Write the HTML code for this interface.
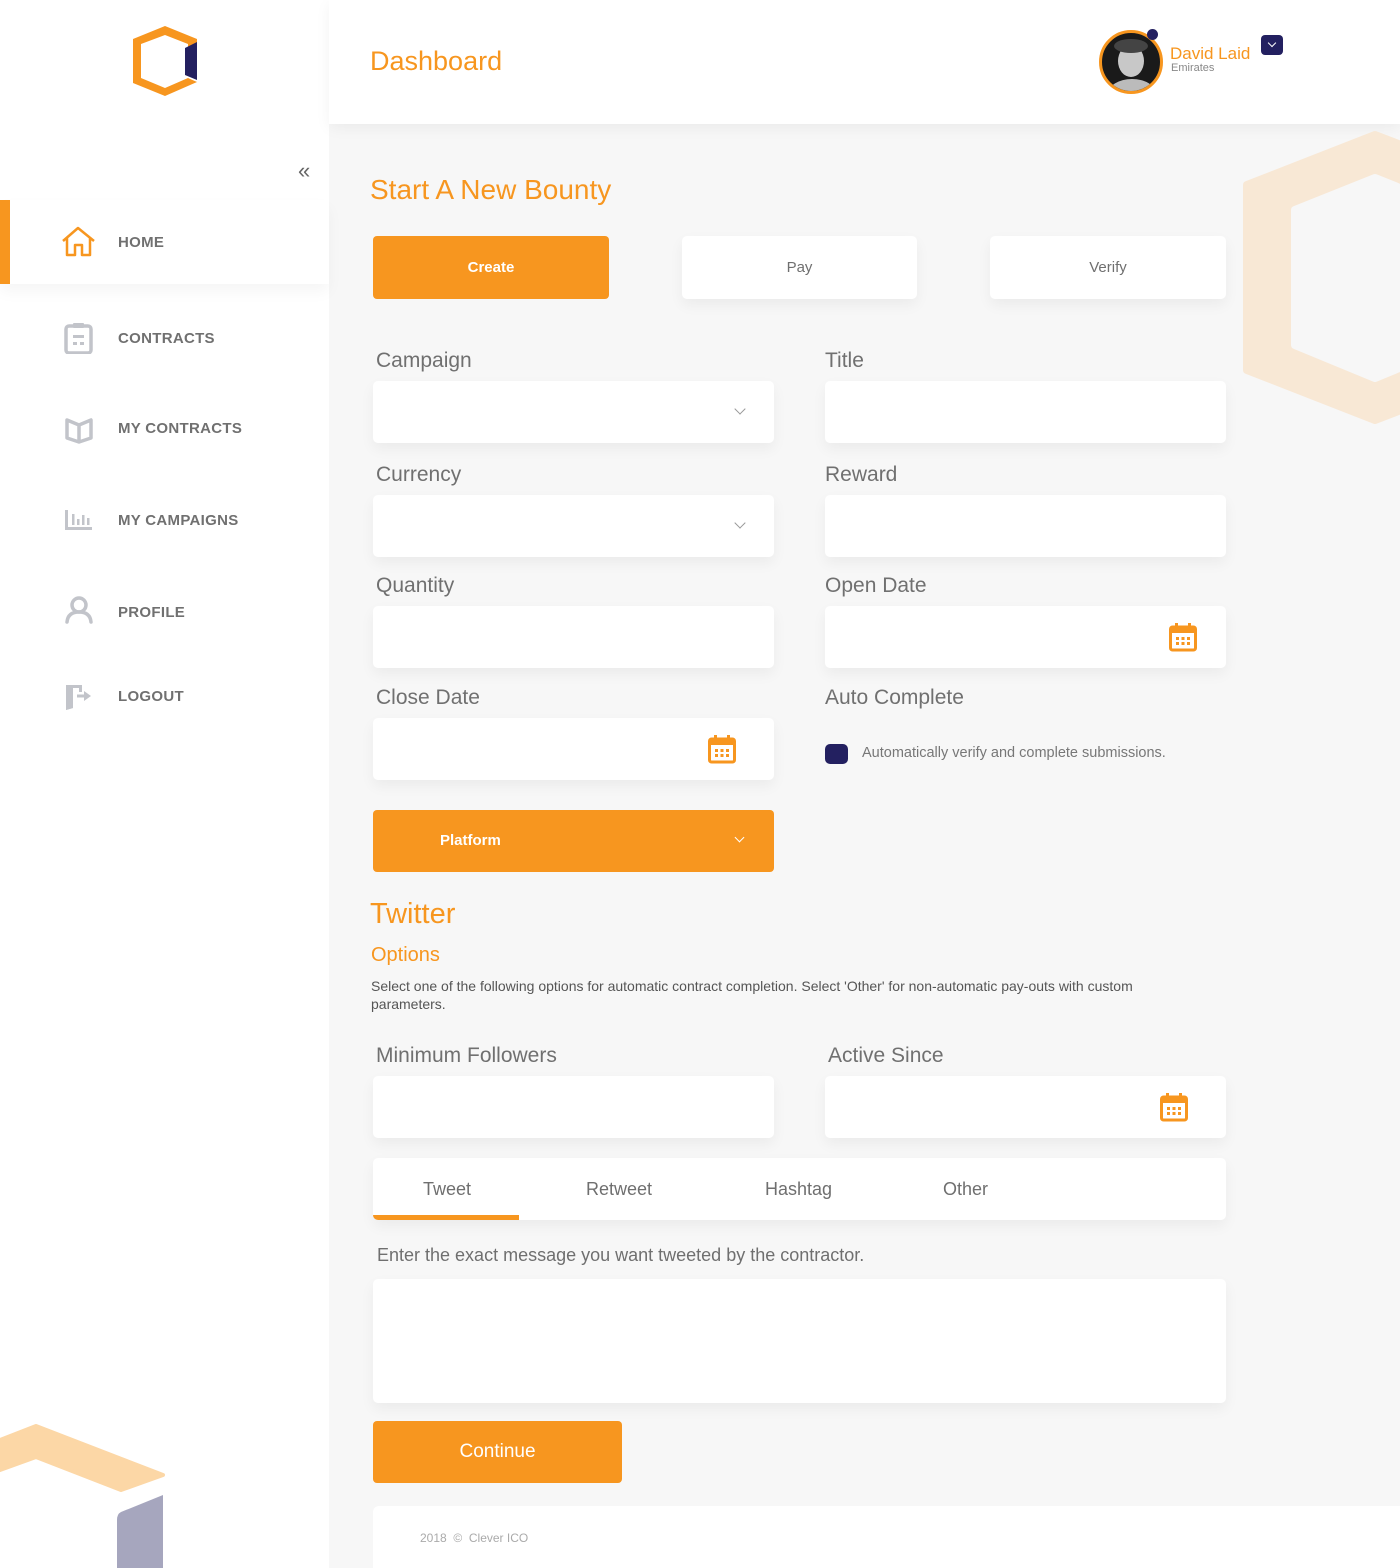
<!DOCTYPE html>
<html><head><meta charset="utf-8"><style>
*{margin:0;padding:0;box-sizing:border-box}
body{width:1400px;height:1568px;position:relative;overflow:hidden;background:#f7f7f7;font-family:"Liberation Sans",sans-serif;color:#6f6f6f}
.a{position:absolute}
.side{left:0;top:0;width:329px;height:1568px;background:#fff}
.hdr{left:329px;top:0;width:1071px;height:124px;background:#fff;box-shadow:0 4px 14px rgba(0,0,0,.05)}
.nav{left:118px;font-size:15px;font-weight:bold;color:#707070;letter-spacing:.3px}
.lbl{font-size:21px;color:#707070;margin-top:2px}
.box{background:#fff;border-radius:5px;box-shadow:0 6px 14px rgba(0,0,0,.05);height:62px}
.btn{background:#f7961f;border-radius:4px;color:#fff;font-weight:bold;text-align:center}
.chev{width:8px;height:8px;border-right:1.5px solid #999;border-bottom:1.5px solid #999;transform:rotate(45deg)}
.orange{color:#f7961f}
</style></head><body>
<div class="a side"></div>
<svg class="a" style="left:0;top:1420px" width="170" height="148"><polygon points="0,20 36,6 163,55 121,70 36,37 0,50" fill="#fcd7a6" stroke="#fcd7a6" stroke-width="4" stroke-linejoin="round"/><path d="M121,92 Q117,94 117,100 L117,148 L163,148 L163,75 Z" fill="#a6a6be"/></svg>
<div class="a hdr"></div>
<svg class="a" style="left:128px;top:22px" width="76" height="78"><polygon points="37,4 69,17 69,26 60,31 60,22 37,13 13,22 13,56 37,66 60,56 69,60 69,60 37,74 5,61 5,17" fill="#f7961f"/><polygon points="57,26 69,20 69,58 57,53" fill="#232060"/></svg>
<div class="a" style="left:298px;top:158px;font-size:22px;color:#666">«</div>
<div class="a" style="left:0;top:200px;width:329px;height:84px;background:#fff;box-shadow:0 8px 14px rgba(0,0,0,.04)"></div>
<div class="a" style="left:0;top:200px;width:10px;height:84px;background:#f7961f"></div>
<svg class="a" style="left:61px;top:226px" width="36" height="32" fill="none" stroke="#f7961f" stroke-width="2.5" stroke-linejoin="round"><path d="M2,15 L17,2 L33,15 M6,12 V29 H14 V19 H21 V29 H29 V12"/></svg>
<div class="a nav" style="top:234px">HOME</div>
<svg class="a" style="left:64px;top:322px" width="30" height="32"><rect x="2" y="4" width="25" height="27" rx="3" fill="none" stroke="#c2c4ca" stroke-width="3.5"/><rect x="9" y="1" width="11" height="5" rx="1" fill="#c2c4ca"/><rect x="9" y="13" width="11" height="3" fill="#c2c4ca"/><rect x="9" y="20" width="4" height="3" fill="#c2c4ca"/><rect x="16" y="20" width="4" height="3" fill="#c2c4ca"/></svg>
<div class="a nav" style="top:330px">CONTRACTS</div>
<svg class="a" style="left:64px;top:416px" width="30" height="28" fill="none" stroke="#c2c4ca" stroke-width="3.5" stroke-linejoin="round"><path d="M3,4 L15,9 L27,4 V22 L15,26 L3,22 Z M15,9 V26"/></svg>
<div class="a nav" style="top:420px">MY CONTRACTS</div>
<svg class="a" style="left:64px;top:508px" width="30" height="24" fill="#c2c4ca"><rect x="1" y="2" width="3" height="20"/><rect x="1" y="19" width="27" height="3"/><rect x="8" y="6" width="2.5" height="11"/><rect x="13" y="11" width="2.5" height="6"/><rect x="18" y="7" width="2.5" height="10"/><rect x="23" y="10" width="2.5" height="7"/></svg>
<div class="a nav" style="top:512px">MY CAMPAIGNS</div>
<svg class="a" style="left:64px;top:595px" width="30" height="30" fill="none" stroke="#c2c4ca" stroke-width="3.5" stroke-linecap="round"><circle cx="15" cy="10" r="7"/><path d="M3,27 Q4,17 15,17 Q26,17 27,27"/></svg>
<div class="a nav" style="top:604px">PROFILE</div>
<svg class="a" style="left:64px;top:682px" width="30" height="30" fill="#c2c4ca"><path d="M2,3 H18 V10 H15 V6 H9 V26 L2,28 Z"/><path d="M9,5 L2,3 V28 L9,26Z"/><rect x="13" y="12.5" width="9" height="3"/><path d="M20,9 L27,14 L20,19 Z"/></svg>
<div class="a nav" style="top:688px">LOGOUT</div>

<div class="a orange" style="left:370px;top:46px;font-size:27px">Dashboard</div>
<div class="a" style="left:1099px;top:30px;width:64px;height:64px;border-radius:50%;border:3px solid #f7961f;background:#1a1a1a;overflow:hidden">
<div class="a" style="left:16px;top:12px;width:26px;height:32px;border-radius:50%;background:#c8c8c8"></div>
<div class="a" style="left:12px;top:6px;width:34px;height:14px;border-radius:50%;background:#444"></div>
<div class="a" style="left:6px;top:46px;width:48px;height:30px;border-radius:50%;background:#bbb"></div>
</div>
<div class="a" style="left:1147px;top:29px;width:11px;height:11px;border-radius:50%;background:#232060"></div>
<div class="a orange" style="left:1170px;top:44px;font-size:17px">David Laid</div>
<div class="a" style="left:1171px;top:62px;font-size:11px;color:#888">Emirates</div>
<div class="a" style="left:1261px;top:35px;width:22px;height:20px;border-radius:4px;background:#232060"><div class="a" style="left:8px;top:5px;width:6px;height:6px;border-right:1.5px solid #fff;border-bottom:1.5px solid #fff;transform:rotate(45deg)"></div></div>

<svg class="a" style="left:1240px;top:130px" width="160" height="300"><polygon points="135,5 265,55 265,240 135,290 7,240 7,55" fill="#f8e8d5" stroke="#f8e8d5" stroke-width="8" stroke-linejoin="round"/><polygon points="135,48 215,80 215,215 135,248 55,215 55,80" fill="#f7f7f7" stroke="#f7f7f7" stroke-width="8" stroke-linejoin="round"/></svg>

<div class="a orange" style="left:370px;top:174px;font-size:28px">Start A New Bounty</div>
<div class="a btn" style="left:373px;top:236px;width:236px;height:63px;line-height:63px;font-size:15px">Create</div>
<div class="a box" style="left:682px;top:236px;width:235px;height:63px;line-height:63px;text-align:center;font-size:15px">Pay</div>
<div class="a box" style="left:990px;top:236px;width:236px;height:63px;line-height:63px;text-align:center;font-size:15px">Verify</div>

<div class="a lbl" style="left:376px;top:347px">Campaign</div>
<div class="a box" style="left:373px;top:381px;width:401px"><div class="a chev" style="left:363px;top:24px"></div></div>
<div class="a lbl" style="left:825px;top:347px">Title</div>
<div class="a box" style="left:825px;top:381px;width:401px"></div>
<div class="a lbl" style="left:376px;top:461px">Currency</div>
<div class="a box" style="left:373px;top:495px;width:401px"><div class="a chev" style="left:363px;top:24px"></div></div>
<div class="a lbl" style="left:825px;top:461px">Reward</div>
<div class="a box" style="left:825px;top:495px;width:401px"></div>
<div class="a lbl" style="left:376px;top:572px">Quantity</div>
<div class="a box" style="left:373px;top:606px;width:401px"></div>
<div class="a lbl" style="left:825px;top:572px">Open Date</div>
<div class="a box" style="left:825px;top:606px;width:401px"><svg class="a" style="left:344px;top:16px" width="28" height="30"><rect x="1.5" y="5" width="25" height="23" rx="2" fill="none" stroke="#f7961f" stroke-width="3"/><rect x="1.5" y="5" width="25" height="6" fill="#f7961f"/><rect x="6" y="1" width="3" height="8" fill="#f7961f"/><rect x="19" y="1" width="3" height="8" fill="#f7961f"/><g fill="#f7961f"><rect x="7" y="15" width="3" height="3"/><rect x="12.5" y="15" width="3" height="3"/><rect x="18" y="15" width="3" height="3"/><rect x="7" y="20" width="3" height="3"/><rect x="12.5" y="20" width="3" height="3"/><rect x="18" y="20" width="3" height="3"/></g></svg></div>
<div class="a lbl" style="left:376px;top:684px">Close Date</div>
<div class="a box" style="left:373px;top:718px;width:401px"><svg class="a" style="left:335px;top:16px" width="28" height="30"><rect x="1.5" y="5" width="25" height="23" rx="2" fill="none" stroke="#f7961f" stroke-width="3"/><rect x="1.5" y="5" width="25" height="6" fill="#f7961f"/><rect x="6" y="1" width="3" height="8" fill="#f7961f"/><rect x="19" y="1" width="3" height="8" fill="#f7961f"/><g fill="#f7961f"><rect x="7" y="15" width="3" height="3"/><rect x="12.5" y="15" width="3" height="3"/><rect x="18" y="15" width="3" height="3"/><rect x="7" y="20" width="3" height="3"/><rect x="12.5" y="20" width="3" height="3"/><rect x="18" y="20" width="3" height="3"/></g></svg></div>
<div class="a lbl" style="left:825px;top:684px">Auto Complete</div>
<div class="a" style="left:825px;top:744px;width:23px;height:20px;border-radius:5px;background:#232060"></div>
<div class="a" style="left:862px;top:745px;font-size:14.5px;color:#777">Automatically verify and complete submissions.</div>

<div class="a btn" style="left:373px;top:810px;width:401px;height:62px;line-height:62px;font-size:15px;text-align:left;padding-left:67px">Platform<div class="a" style="left:363px;top:24px;width:7px;height:7px;border-right:1.5px solid #fff;border-bottom:1.5px solid #fff;transform:rotate(45deg)"></div></div>

<div class="a orange" style="left:370px;top:898px;font-size:29px">Twitter</div>
<div class="a orange" style="left:371px;top:944px;font-size:20px">Options</div>
<div class="a" style="left:371px;top:977px;font-size:14px;line-height:18px;color:#555;width:770px">Select one of the following options for automatic contract completion. Select 'Other' for non-automatic pay-outs with custom parameters.</div>

<div class="a lbl" style="left:376px;top:1042px">Minimum Followers</div>
<div class="a box" style="left:373px;top:1076px;width:401px"></div>
<div class="a lbl" style="left:828px;top:1042px">Active Since</div>
<div class="a box" style="left:825px;top:1076px;width:401px"><svg class="a" style="left:335px;top:16px" width="28" height="30"><rect x="1.5" y="5" width="25" height="23" rx="2" fill="none" stroke="#f7961f" stroke-width="3"/><rect x="1.5" y="5" width="25" height="6" fill="#f7961f"/><rect x="6" y="1" width="3" height="8" fill="#f7961f"/><rect x="19" y="1" width="3" height="8" fill="#f7961f"/><g fill="#f7961f"><rect x="7" y="15" width="3" height="3"/><rect x="12.5" y="15" width="3" height="3"/><rect x="18" y="15" width="3" height="3"/><rect x="7" y="20" width="3" height="3"/><rect x="12.5" y="20" width="3" height="3"/><rect x="18" y="20" width="3" height="3"/></g></svg></div>

<div class="a box" style="left:373px;top:1158px;width:853px;overflow:hidden">
<div class="a" style="left:50px;top:21px;font-size:18px">Tweet</div>
<div class="a" style="left:213px;top:21px;font-size:18px">Retweet</div>
<div class="a" style="left:392px;top:21px;font-size:18px">Hashtag</div>
<div class="a" style="left:570px;top:21px;font-size:18px">Other</div>
<div class="a" style="left:0;top:57px;width:146px;height:5px;background:#f7961f"></div>
</div>
<div class="a" style="left:377px;top:1245px;font-size:18px">Enter the exact message you want tweeted by the contractor.</div>
<div class="a box" style="left:373px;top:1279px;width:853px;height:124px"></div>
<div class="a btn" style="left:373px;top:1421px;width:249px;height:62px;line-height:62px;font-size:19px;font-weight:normal">Continue</div>
<div class="a" style="left:373px;top:1506px;width:1027px;height:62px;background:#fff;border-radius:6px 0 0 0"></div>
<div class="a" style="left:420px;top:1531px;font-size:12px;color:#aaa">2018 &nbsp;© &nbsp;Clever ICO</div>
</body></html>
